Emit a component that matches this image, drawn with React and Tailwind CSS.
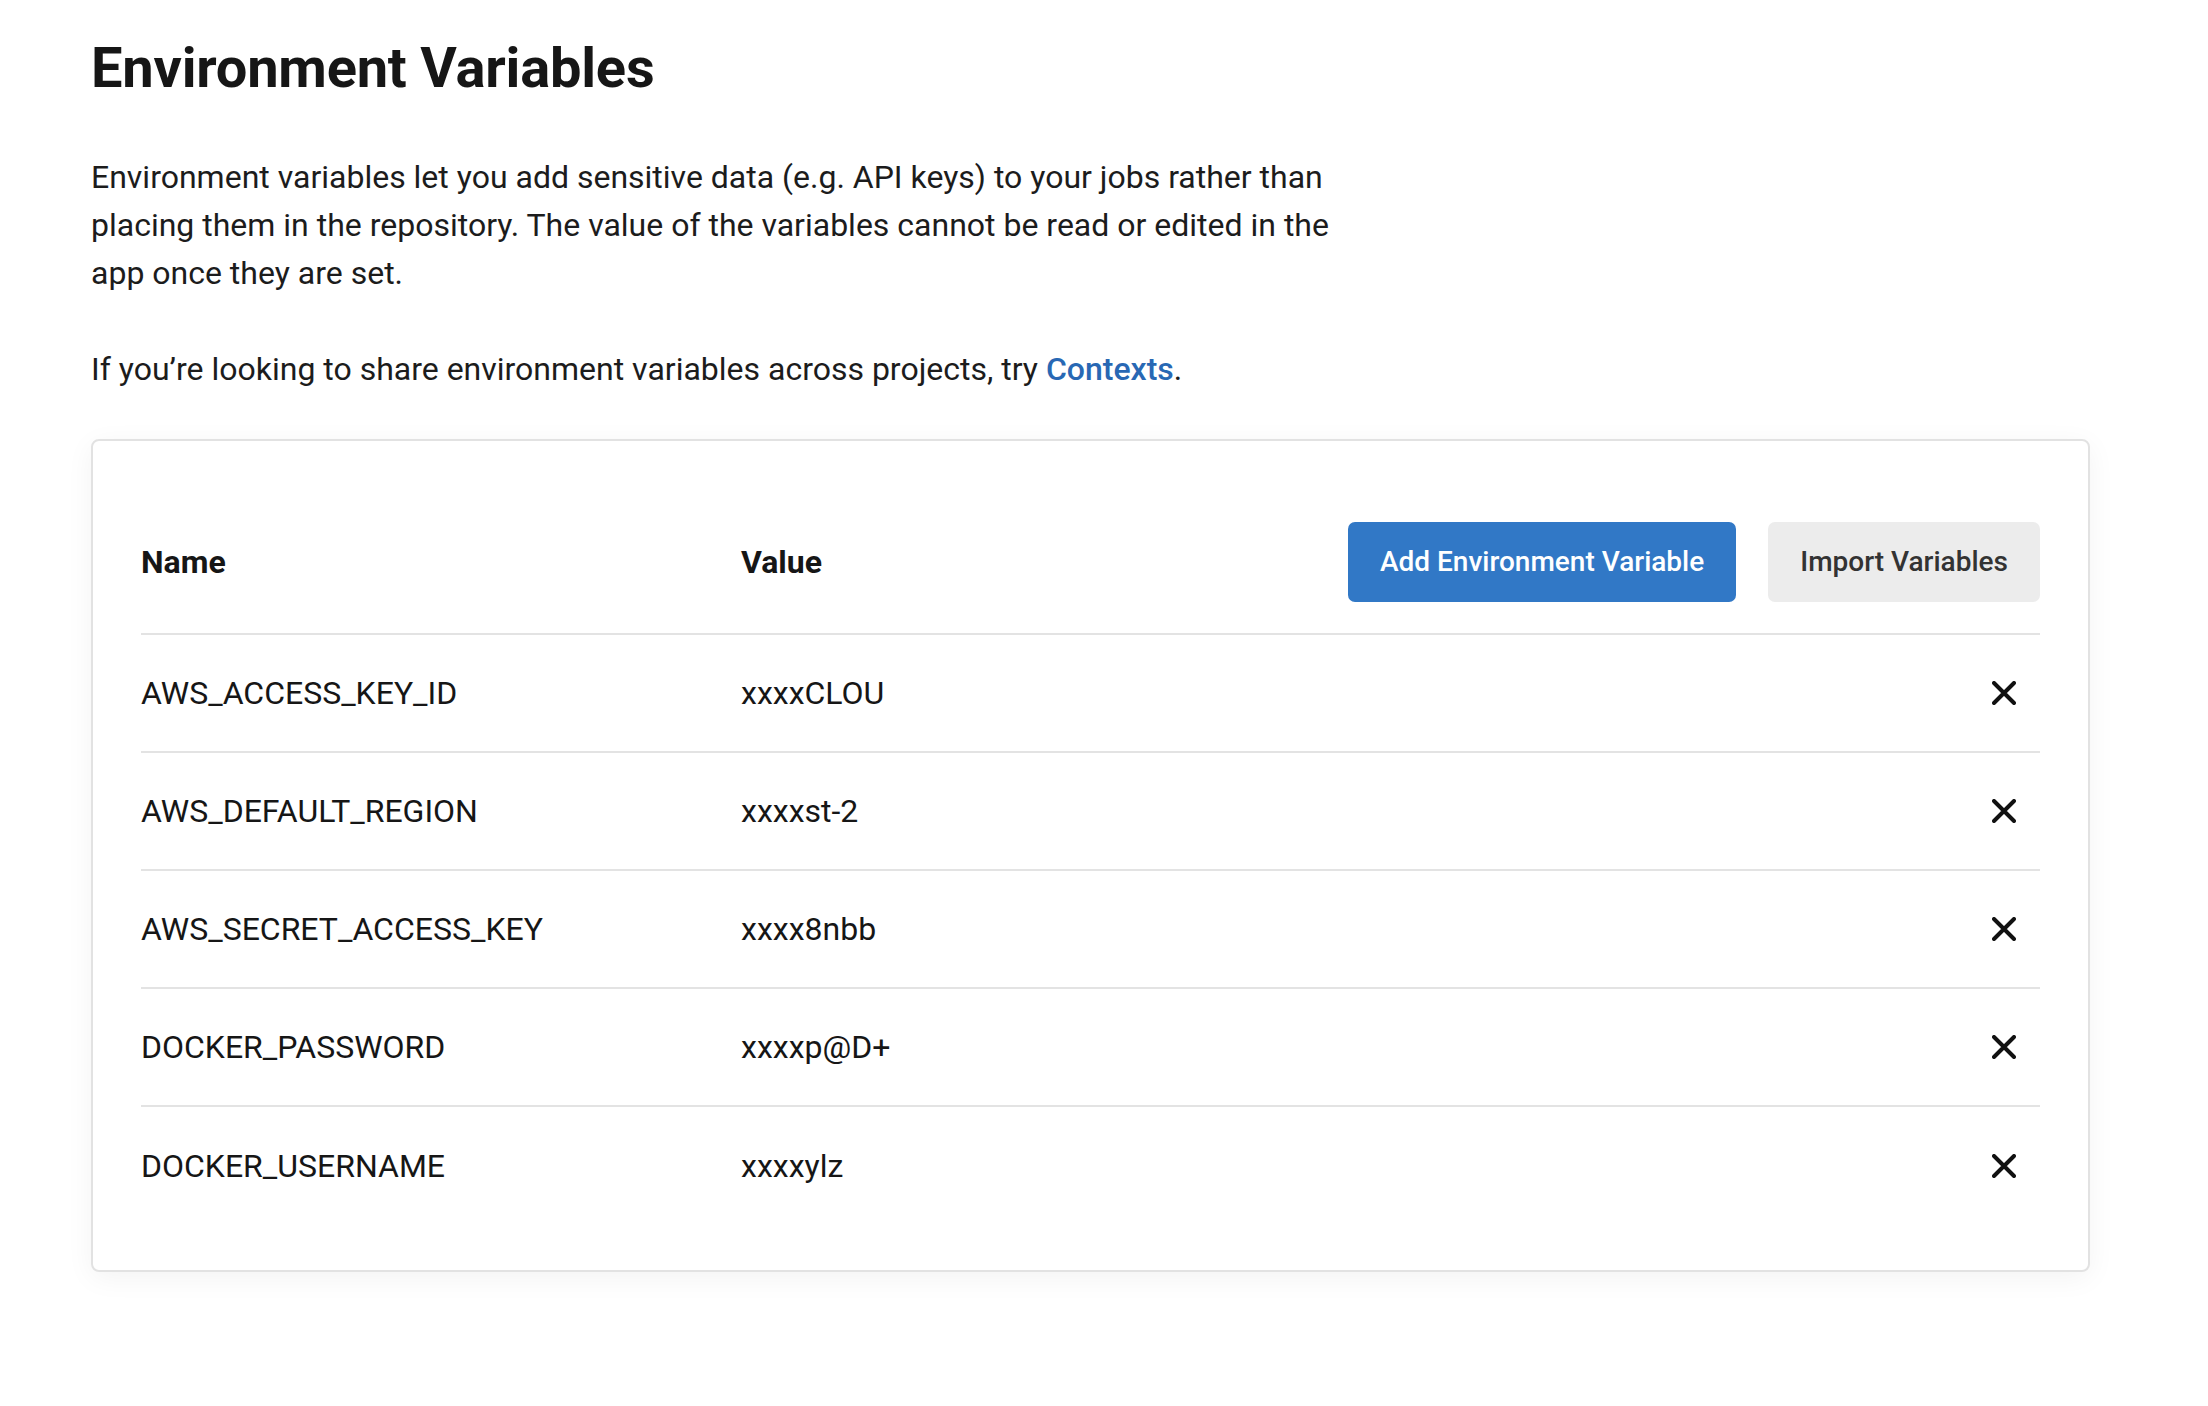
import React from "react";

const rows = [
  { name: "AWS_ACCESS_KEY_ID", value: "xxxxCLOU" },
  { name: "AWS_DEFAULT_REGION", value: "xxxxst-2" },
  { name: "AWS_SECRET_ACCESS_KEY", value: "xxxx8nbb" },
  { name: "DOCKER_PASSWORD", value: "xxxxp@D+" },
  { name: "DOCKER_USERNAME", value: "xxxxylz" },
];

const CloseIcon = () => (
  <svg width="24" height="24" viewBox="0 0 24 24" fill="none">
    <path d="M2 2L22 22M22 2L2 22" stroke="#111" strokeWidth="4" strokeLinecap="round" />
  </svg>
);

export default function App() {
  return (
    <div className="min-h-screen bg-white pl-[91px] pt-[35px] font-['Roboto',sans-serif] text-[#1c1c1c]">
      {/* Title + description */}
      <h1 className="text-[56px] leading-[67px] font-bold text-[#161616] tracking-[-0.2px]">
        Environment Variables
      </h1>

      <p className="mt-[51px] max-w-[1290px] text-[32px] leading-[48px]">
        Environment variables let you add sensitive data (e.g. API keys) to your jobs rather than placing them in the
        repository. The value of the variables cannot be read or edited in the app once they are set.
      </p>

      <p className="mt-[48px] text-[32px] leading-[48px]">
        If you’re looking to share environment variables across projects, try{" "}
        <a href="#" className="font-medium text-[#2868b4]">
          Contexts
        </a>
        .
      </p>

      {/* Variables card */}
      <div className="mt-[46px] w-[1999px] rounded-[8px] border-2 border-[#e2e2e2] bg-white px-[48px] pt-[46px] pb-[45px] shadow-[0_6px_28px_rgba(0,0,0,0.05)]">
        <div className="flex items-center border-b-2 border-[#e3e3e3] pt-[35px] pb-[31px]">
          <div className="w-[600px] text-[32px] font-bold text-[#161616]">Name</div>
          <div className="flex-1 text-[32px] font-bold text-[#161616]">Value</div>
          <div className="flex gap-[32px]">
            <button className="h-[80px] rounded-[7px] bg-[#3178c6] px-[32px] text-[28px] font-medium text-white">
              Add Environment Variable
            </button>
            <button className="h-[80px] rounded-[7px] bg-[#ececec] px-[32px] text-[28px] font-medium text-[#333]">
              Import Variables
            </button>
          </div>
        </div>

        {rows.map((r, i) => (
          <div
            key={r.name}
            className={
              "flex h-[118px] items-center text-[32px] text-[#161616] " +
              (i < rows.length - 1 ? "border-b-2 border-[#e3e3e3]" : "")
            }
          >
            <div className="w-[600px]">{r.name}</div>
            <div className="flex-1">{r.value}</div>
            <button className="mr-[24px] flex items-center justify-center">
              <CloseIcon />
            </button>
          </div>
        ))}
      </div>
    </div>
  );
}
